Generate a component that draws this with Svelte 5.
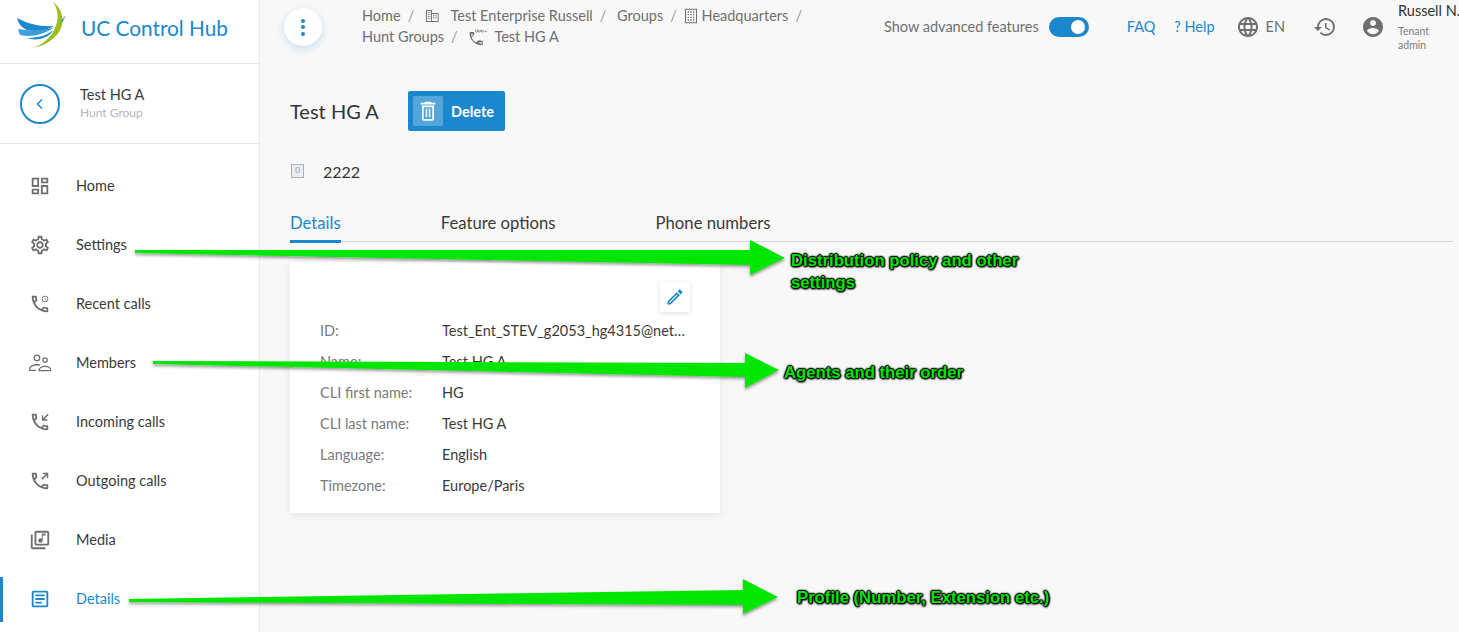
<script>
  const ic = {
    dash: "M19 5v2h-4V5h4M9 5v6H5V5h4m10 8v6h-4v-6h4M9 17v2H5v-2h4M21 3h-8v6h8V3zM11 3H3v10h8V3zm10 8h-8v10h8V11zm-10 4H3v6h8v-6z",
    gear: "M19.43 12.98c.04-.32.07-.64.07-.98 0-.34-.03-.66-.07-.98l2.11-1.65c.19-.15.24-.42.12-.64l-2-3.46c-.09-.16-.26-.25-.44-.25-.06 0-.12.01-.17.03l-2.49 1c-.52-.4-1.08-.73-1.69-.98l-.38-2.65C14.46 2.18 14.25 2 14 2h-4c-.25 0-.46.18-.49.42l-.38 2.65c-.61.25-1.17.59-1.69.98l-2.49-1c-.06-.02-.12-.03-.18-.03-.17 0-.34.09-.43.25l-2 3.46c-.13.22-.07.49.12.64l2.11 1.65c-.04.32-.07.65-.07.98 0 .33.03.66.07.98l-2.11 1.65c-.19.15-.24.42-.12.64l2 3.46c.09.16.26.25.44.25.06 0 .12-.01.17-.03l2.49-1c.52.4 1.08.73 1.69.98l.38 2.65c.03.24.24.42.49.42h4c.25 0 .46-.18.49-.42l.38-2.65c.61-.25 1.17-.59 1.69-.98l2.49 1c.06.02.12.03.18.03.17 0 .34-.09.43-.25l2-3.46c.12-.22.07-.49-.12-.64l-2.11-1.65zm-1.98-1.71c.04.31.05.52.05.73 0 .21-.02.43-.05.73l-.14 1.13.89.7 1.08.84-.7 1.21-1.27-.51-1.04-.42-.9.68c-.43.32-.84.56-1.25.73l-1.06.43-.16 1.13-.2 1.35h-1.4l-.19-1.35-.16-1.13-1.06-.43c-.43-.18-.83-.41-1.23-.71l-.91-.7-1.06.43-1.27.51-.7-1.21 1.08-.84.89-.7-.14-1.13c-.03-.31-.05-.54-.05-.74s.02-.43.05-.73l.14-1.13-.89-.7-1.08-.84.7-1.21 1.27.51 1.04.42.9-.68c.43-.32.84-.56 1.25-.73l1.06-.43.16-1.13.2-1.35h1.39l.19 1.35.16 1.13 1.06.43c.43.18.83.41 1.23.71l.91.7 1.06-.43 1.27-.51.7 1.21-1.07.85-.89.7.14 1.13zM12 8c-2.21 0-4 1.79-4 4s1.79 4 4 4 4-1.79 4-4-1.79-4-4-4zm0 6c-1.1 0-2-.9-2-2s.9-2 2-2 2 .9 2 2-.9 2-2 2z",
    phone: "M6.54 5c.06.89.21 1.76.45 2.59l-1.2 1.2c-.41-1.2-.67-2.47-.76-3.79h1.51m9.86 12.02c.85.24 1.72.39 2.6.45v1.49c-1.32-.09-2.59-.35-3.8-.75l1.2-1.19M7.5 3H4c-.55 0-1 .45-1 1 0 9.39 7.61 17 17 17 .55 0 1-.45 1-1v-3.49c0-.55-.45-1-1-1-1.24 0-2.45-.2-3.57-.57-.1-.04-.21-.05-.31-.05-.26 0-.51.1-.71.29l-2.2 2.2c-2.83-1.45-5.15-3.76-6.59-6.59l2.2-2.2c.28-.28.36-.67.25-1.02C8.7 6.45 8.5 5.25 8.5 4c0-.55-.45-1-1-1z",
    clock: "M17.5 3a3.5 3.5 0 1 0 0 7 3.5 3.5 0 0 0 0-7zm0 .8a2.7 2.7 0 1 1 0 5.4 2.7 2.7 0 0 1 0-5.4zM17.2 4.8h.6v2h1.4v.6h-2z",
    inArr: "M20.3 3 15.5 7.800V4.500H14V10.500H20V9H16.700L21.500 4.200z",
    outArr: "M15 3v1.500h3.300L13.500 9.300l1.200 1.200L19.500 5.700V9H21V3z",
    media: "M4 6H2v14c0 1.100.9 2 2 2h14v-2H4V6zm16-4H8c-1.100 0-2 .9-2 2v12c0 1.100.9 2 2 2h12c1.100 0 2-.9 2-2V4c0-1.100-.9-2-2-2zm0 14H8V4h12v12zm-7.500-1c1.380 0 2.500-1.120 2.500-2.500V7h3V5h-4v5.500c-.42-.31-.93-.5-1.500-.5-1.380 0-2.500 1.120-2.500 2.500s1.120 2.500 2.500 2.500z",
    article: "M19 5v14H5V5h14m0-2H5c-1.100 0-2 .9-2 2v14c0 1.100.9 2 2 2h14c1.100 0 2-.9 2-2V5c0-1.100-.9-2-2-2zM14 17H7v-2h7v2zm3-4H7v-2h10v2zm0-4H7V7h10v2z",
    history: "M13 3a9 9 0 0 0-9 9H1l3.890 3.890.07.14L9 12H6c0-3.870 3.130-7 7-7s7 3.130 7 7-3.130 7-7 7c-1.930 0-3.680-.79-4.940-2.060l-1.420 1.420A8.954 8.954 0 0 0 13 21a9 9 0 0 0 0-18zm-1 5v5l4.280 2.540.72-1.210-3.500-2.080V8H12z",
    account: "M12 2C6.480 2 2 6.480 2 12s4.480 10 10 10 10-4.480 10-10S17.520 2 12 2zm0 3c1.660 0 3 1.340 3 3s-1.340 3-3 3-3-1.340-3-3 1.340-3 3-3zm0 14.200c-2.500 0-4.710-1.280-6-3.220.03-1.990 4-3.080 6-3.080 1.990 0 5.970 1.090 6 3.080-1.290 1.940-3.500 3.220-6 3.220z",
    globe: "M11.990 2C6.470 2 2 6.480 2 12s4.470 10 9.990 10C17.520 22 22 17.520 22 12S17.520 2 11.990 2zm6.930 6h-2.950c-.32-1.250-.78-2.450-1.380-3.560 1.840.63 3.370 1.910 4.330 3.560zM12 4.040c.83 1.200 1.480 2.530 1.910 3.960h-3.820c.43-1.430 1.080-2.760 1.910-3.960zM4.260 14C4.100 13.360 4 12.690 4 12s.1-1.360.26-2h3.380c-.08.66-.14 1.320-.14 2 0 .68.06 1.340.14 2H4.260zm.82 2h2.950c.32 1.250.78 2.450 1.380 3.560-1.840-.63-3.370-1.900-4.330-3.560zm2.950-8H5.080c.96-1.660 2.490-2.930 4.330-3.560C8.810 5.550 8.350 6.750 8.030 8zM12 19.960c-.83-1.200-1.480-2.530-1.910-3.960h3.820c-.43 1.430-1.080 2.760-1.910 3.960zM14.340 14H9.660c-.09-.66-.16-1.320-.16-2 0-.68.07-1.350.16-2h4.680c.09.65.16 1.320.16 2 0 .68-.07 1.340-.16 2zm.25 5.560c.6-1.110 1.060-2.310 1.380-3.560h2.950c-.96 1.650-2.490 2.930-4.330 3.560zM16.360 14c.08-.66.14-1.320.14-2 0-.68-.06-1.340-.14-2h3.380c.16.64.26 1.310.26 2s-.1 1.360-.26 2h-3.380z",
    edit: "M3 17.250V21h3.750L17.810 9.940l-3.750-3.750L3 17.250zM5.920 19H5v-.92l9.060-9.060.92.92L5.920 19zM20.710 7.040c.39-.39.39-1.020 0-1.410l-2.340-2.340c-.2-.2-.45-.29-.71-.29s-.51.1-.7.28l-1.830 1.830 3.750 3.750 1.830-1.820z",
    trash: "M9 2h6l1 1h4v2H4V3h4zM5.500 6h13v14.500a2 2 0 0 1-2 2h-9a2 2 0 0 1-2-2zm1.800 1.800v12.700c0 .1.100.2.200.2h9c.1 0 .2-.1.2-.2V7.800zM9.500 9.500h1.600v9H9.500zm3.400 0h1.600v9h-1.600z",
    enterprise: "M3 3h9v4.500h10V21H3zm1.400 1.400v15.200H10.600V4.400zM12 8.900v10.700h8.600V8.900zM5.600 6h1.500v1.500H5.600zm2.600 0h1.300v1.500H8.200zM5.600 9h1.500v1.500H5.600zm2.600 0h1.300v1.500H8.200zM5.600 12h1.500v1.500H5.600zm2.600 0h1.300v1.500H8.200zM5.600 15h1.500v1.500H5.600zm2.600 0h1.300v1.500H8.200zM13.500 11h2v1.500h-2zm3.500 0h2v1.500h-2zm-3.500 3h2v1.500h-2zm3.500 0h2v1.500h-2z",
    hq: "M3 1h18v22H3zm1.500 1.500v19h15v-19zM7 5h2v2H7zm4 0h2v2h-2zm4 0h2v2h-2zM7 9h2v2H7zm4 0h2v2h-2zm4 0h2v2h-2zM7 13h2v2H7zm4 0h2v2h-2zm4 0h2v2h-2zM7 17h2v2H7zm4 0h2v2h-2zm4 0h2v2h-2z",
  };
  const membersStroke = [
    "M8.700 3.500a3 3 0 1 0 0 6 3 3 0 0 0 0-6z",
    "M17.500 6.300a2.400 2.400 0 1 0 0 4.800 2.400 2.400 0 0 0 0-4.800z",
    "M7.500 20H.8v-1.500c0-2.700 3.700-4.600 8-4.600 1.100 0 2.200.1 3.200.4",
    "M11 20.300c0-2.800 2.900-4.700 6.500-4.700s6.500 1.900 6.500 4.700z",
  ];
  const nav = [
    { label: "Home", icons: [ic.dash] },
    { label: "Settings", icons: [ic.gear] },
    { label: "Recent calls", icons: [ic.phone, ic.clock] },
    { label: "Members", icons: [], strokes: membersStroke },
    { label: "Incoming calls", icons: [ic.phone, ic.inArr] },
    { label: "Outgoing calls", icons: [ic.phone, ic.outArr] },
    { label: "Media", icons: [ic.media] },
    { label: "Details", icons: [ic.article], active: true },
  ];
  const rows = [
    ["ID:", "Test_Ent_STEV_g2053_hg4315@netaxis.example"],
    ["Name:", "Test HG A"],
    ["CLI first name:", "HG"],
    ["CLI last name:", "Test HG A"],
    ["Language:", "English"],
    ["Timezone:", "Europe/Paris"],
  ];
</script>

<div class="app">
  <aside class="side">
    <div class="brand">
      <svg class="logo" viewBox="0 0 50 50" width="50" height="50" aria-hidden="true">
        <path d="M1 18C12 24 25 27 38 26C31 31 20 32 11 30C6 28 2 23 1 18Z" fill="#1b87cd"/>
        <path d="M2 29C12 31 25 31 37 28C29 34 15 38 4 35Z" fill="#3a9fdc"/>
        <path d="M11 38C20 38 31 36 37 30C34 37 22 42 11 38Z" fill="#1b87cd"/>
        <path d="M37 2C46 8 50 22 43 32C37 41 27 46 17 48C27 44 34 38 38 30C43 21 43 10 37 2Z" fill="#9dbf1f"/>
        <path d="M50 15L46 20L44 24L47 21Z" fill="#1b87cd"/>
      </svg>
      <span class="brand-name">UC Control Hub</span>
    </div>
    <div class="back">
      <button class="back-btn" aria-label="Back">
        <svg viewBox="0 0 12 12" width="12" height="12"><path d="M8 1.500 3.500 6 8 10.500" fill="none" stroke="#1b87cd" stroke-width="1.500"/></svg>
      </button>
      <div>
        <div class="back-title">Test HG A</div>
        <div class="back-sub">Hunt Group</div>
      </div>
    </div>
    <nav class="nav">
      {#each nav as item}
        <div class="nav-item" class:active={item.active}>
          <svg viewBox="0 0 24 24" width="22" height="22" class="nav-ic">
            {#each item.icons as d}<path {d}/>{/each}
            {#each item.strokes ?? [] as d}<path {d} class="line"/>{/each}
          </svg>
          <span>{item.label}</span>
        </div>
      {/each}
    </nav>
  </aside>

  <main class="main">
    <header class="top">
      <button class="menu" aria-label="Menu"><i></i><i></i><i></i></button>
      <div class="crumbs">
        <span>Home</span><b>/</b>
        <svg class="ci ent" viewBox="0 0 24 24" width="16" height="16"><path d={ic.enterprise}/></svg><span>Test Enterprise Russell</span><b>/</b>
        <span>Groups</span><b>/</b>
        <svg class="ci hq" viewBox="0 0 24 24" width="16" height="16"><path d={ic.hq}/></svg><span>Headquarters</span><b>/</b>
        <br/>
        <span>Hunt Groups</span><b>/</b>
        <svg class="ci hg" viewBox="0 0 24 24" width="20" height="20"><path d="M6.540 8c.06.89.21 1.760.45 2.590l-1.200 1.200c-.41-1.200-.67-2.470-.76-3.790h1.510m8.860 10.020c.85.24 1.720.39 2.600.45v1.490c-1.320-.09-2.590-.35-3.800-.75l1.200-1.190M7.500 6H4c-.55 0-1 .45-1 1 0 8.390 6.610 15 15 15 .55 0 1-.45 1-1v-3.490c0-.55-.45-1-1-1-1.240 0-2.450-.2-3.570-.57-.1-.04-.21-.05-.31-.05-.26 0-.51.1-.71.29l-2.200 2.200c-2.830-1.450-4.150-2.760-5.590-5.590l2.200-2.200c.28-.28.36-.67.25-1.020C8.700 9.450 8.500 8.250 8.500 7c0-.55-.45-1-1-1z"/><path d="M10.500 3v2.500c1 1.500 2 1 2-.5V3.500M14 3.500V5c0 1.500 2 1.500 2 0V3.500M17.500 3.500V5c0 1.500 2 1.500 2 0V3.500M21 5.500h2.500" fill="none" stroke="#6f6f6f" stroke-width="1"/></svg><span>Test HG A</span>
      </div>
      <div class="tools">
        <span class="adv">Show advanced features</span>
        <span class="toggle"><i></i></span>
        <span class="link faq">FAQ</span>
        <span class="link help">? Help</span>
        <svg class="globe" viewBox="0 0 24 24" width="24" height="24"><path d={ic.globe}/></svg>
        <span class="lang">EN</span>
        <svg class="hist" viewBox="0 0 24 24" width="24" height="24"><path d={ic.history}/></svg>
        <svg class="acct" viewBox="0 0 24 24" width="24" height="24"><path d={ic.account}/></svg>
        <div class="user">
          <div class="uname">Russell N.</div>
          <div class="urole">Tenant<br/>admin</div>
        </div>
      </div>
    </header>

    <section class="content">
      <div class="title-row">
        <h1>Test HG A</h1>
        <button class="del">
          <span class="del-ic"><svg viewBox="0 0 24 24" width="22" height="22"><path d={ic.trash}/></svg></span>
          <span>Delete</span>
        </button>
      </div>
      <div class="ext">
        <span class="ext-ic">0</span>
        <span>2222</span>
      </div>
      <div class="tabs">
        <span class="tab on">Details</span>
        <span class="tab">Feature options</span>
        <span class="tab">Phone numbers</span>
      </div>
      <div class="card">
        <div class="card-head">
          <button class="edit" aria-label="Edit"><svg viewBox="0 0 24 24" width="20" height="20"><path d={ic.edit}/></svg></button>
        </div>
        {#each rows as [k, v]}
          <div class="row"><span class="k">{k}</span><span class="v">{v}</span></div>
        {/each}
      </div>
    </section>
  </main>

  <svg class="arrows" viewBox="0 0 1459 632" width="1459" height="632" aria-hidden="true">
    <defs><filter id="sh" x="-5%" y="-50%" width="110%" height="200%"><feDropShadow dx="0" dy="2" stdDeviation="1.500" flood-color="#000" flood-opacity=".4"/></filter></defs>
    <g fill="#00e600" filter="url(#sh)">
      <polygon points="135,250 750,250 750,240 785,258 750,275 750,265 135,253"/>
      <polygon points="153,361 745,363 745,353 779,370 745,388 745,377 153,364"/>
      <polygon points="129,599 743,590 743,579 778,597 743,614 743,605 129,602"/>
    </g>
  </svg>
  <div class="note n1">Distribution policy and other<br/>settings</div>
  <div class="note n2">Agents and their order</div>
  <div class="note n3">Profile (Number, Extension etc.)</div>
</div>

<style>
  :global(body) { margin: 0; background: #f8f8f8; }
  .app {
    position: relative; display: flex; width: 1459px; height: 632px; overflow: hidden;
    font-family: "Lato", "Noto Sans", sans-serif; font-size: 14.5px; color: #3a3a3a; background: #f8f8f8;
  }
  button { border: 0; padding: 0; font: inherit; cursor: pointer; }
  svg { display: block; flex: none; }

  .side { width: 259px; flex: none; background: #fff; border-right: 1px solid #e6e9ee; }
  .brand { height: 50px; display: flex; align-items: center; padding: 0 0 13px 16px; border-bottom: 1px solid #e3e6eb; }
  .brand-name { margin: 5px 0 0 15px; font-size: 20.8px; color: #1b87cd; }
  .back { height: 79px; display: flex; align-items: center; padding-left: 20px; border-bottom: 1px solid #e3e6eb; }
  .back-btn { width: 40px; height: 40px; border-radius: 50%; border: 2px solid #1b87cd; background: #fff; display: flex; align-items: center; justify-content: center; box-sizing: border-box; margin-right: 20px; }
  .back-title { font-size: 14.5px; line-height: 18px; }
  .back-sub { font-size: 12px; line-height: 18px; color: #b0b6bc; }
  .nav { padding-top: 12px; }
  .nav-item { position: relative; height: 59px; display: flex; align-items: center; padding-left: 29px; gap: 25px; }
  .nav-ic { fill: #6f6f6f; }
  .line { fill: none; stroke: #6f6f6f; stroke-width: 1.400; }
  .nav-item.active { color: #1b87cd; }
  .nav-item.active .nav-ic { fill: #1b87cd; }
  .nav-item.active::before { content: ""; position: absolute; left: 0; top: 8px; width: 3px; height: 45px; background: #1b87cd; }

  .main { flex: 1; min-width: 0; }
  .top { height: 54px; display: flex; align-items: flex-start; }
  .menu { width: 38px; height: 38px; margin: 8px 0 0 24px; border-radius: 50%; background: #fff; box-shadow: 0 3px 8px rgba(27,135,205,.22); display: flex; flex-direction: column; align-items: center; justify-content: center; gap: 2.500px; flex: none; }
  .menu i { width: 4px; height: 4px; border-radius: 50%; background: #1b87cd; }
  .crumbs { margin: 5px 0 0 40px; width: 470px; flex: none; line-height: 21px; color: #6f6f6f; font-size: 14.5px; }
  .crumbs b { font-weight: 400; color: #9a9a9a; margin: 0 7px; }
  .ci { display: inline-block; vertical-align: -3px; fill: #6f6f6f; }
  .ci.ent { margin: 0 10px 0 -.5px; }
  .ci.hq { margin: 0 3px 0 -5px; }
  .ci.hg { margin: 0 7px 0 -1px; vertical-align: -5px; }
  .tools { display: flex; align-items: center; height: 54px; margin-left: 52px; flex: none; color: #6f6f6f; }
  .adv, .link, .lang { font-size: 14.5px; padding-bottom: 2px; }
  .toggle { width: 40px; height: 20px; border-radius: 10px; background: #1b87cd; margin-left: 10px; position: relative; display: block; flex: none; }
  .toggle i { position: absolute; top: 3px; right: 4px; width: 14px; height: 14px; border-radius: 50%; background: #fff; }
  .link { color: #1b87cd; }
  .faq { margin-left: 38px; }
  .help { margin-left: 19px; }
  .globe { margin-left: 21px; fill: #6f6f6f; }
  .lang { margin-left: 6px; }
  .hist { margin-left: 28px; fill: #6f6f6f; }
  .acct { margin-left: 24px; fill: #6f6f6f; }
  .user { margin-left: 13px; align-self: flex-start; width: 61px; white-space: nowrap; }
  .uname { color: #333; line-height: 20px; margin-top: 1px; }
  .urole { font-size: 10.5px; line-height: 14px; margin-top: 3px; color: #7a7a7a; }

  .content { padding: 0 6px 0 30px; }
  .title-row { display: flex; align-items: center; height: 40px; margin-top: 37px; }
  h1 { font-weight: 400; font-size: 20px; margin: 0; width: 118px; color: #333; }
  .del { width: 97px; height: 40px; border-radius: 2px; background: #1b87cd; color: #fff; display: flex; align-items: center; padding-left: 5px; gap: 8px; font-size: 14.5px; font-weight: 700; }
  .del-ic { width: 30px; height: 30px; background: rgba(255,255,255,.25); border-radius: 2px; display: flex; align-items: center; justify-content: center; }
  .del-ic svg { fill: #fff; }
  .ext { display: flex; align-items: center; margin-top: 30px; height: 20px; font-size: 16px; color: #333; }
  .ext-ic { width: 13px; height: 14px; margin-left: 1px; margin-right: 19px; border: 1.500px solid #a9b2ba; box-sizing: border-box; background: #e9ecef; font-size: 8px; line-height: 11px; text-align: center; color: #8f99a3; }
  .tabs { display: flex; gap: 100px; margin-top: 21px; height: 39px; border-bottom: 1px solid #d6d6d6; font-size: 16.7px; color: #3a3a3a; position: relative; }
  .tab { padding-top: 11px; height: 28px; position: relative; }
  .tab.on { color: #1b87cd; }
  .tab.on::after { content: ""; position: absolute; left: 0; right: 0; top: 38px; height: 3px; background: #1b87cd; }
  .card { width: 430px; height: 251px; margin-top: 20px; background: #fff; box-shadow: 0 2px 8px rgba(0,0,0,.08); box-sizing: border-box; padding: 20px 30px 0; }
  .card-head { display: flex; justify-content: flex-end; height: 30px; margin-bottom: 3px; }
  .edit { width: 30px; height: 30px; background: #fff; box-shadow: 0 1px 5px rgba(0,0,0,.14); border-radius: 2px; display: flex; align-items: center; justify-content: center; }
  .edit svg { fill: #1b87cd; }
  .row { display: flex; height: 31px; align-items: center; }
  .k { width: 122px; flex: none; color: #7a7a7a; }
  .v { width: 246px; white-space: nowrap; overflow: hidden; text-overflow: ellipsis; color: #3a3a3a; }

  .arrows { position: absolute; left: 0; top: 0; pointer-events: none; }
  .note {
    position: absolute; font-family: "Liberation Sans", sans-serif; font-weight: 700; font-size: 16.700px; line-height: 22px; color: #00e600; white-space: nowrap;
    text-shadow: 0 0 2px #000, 0 0 2px #000, 0 0 3px #000, 1px 1px 2px #000, -1px 0 1px #000, 1px 0 1px #000, 0 1px 2px #000, 0 -1px 1px #000;
  }
  .n1 { left: 791px; top: 250px; }
  .n2 { left: 784px; top: 362px; }
  .n3 { left: 797px; top: 587px; }
</style>
